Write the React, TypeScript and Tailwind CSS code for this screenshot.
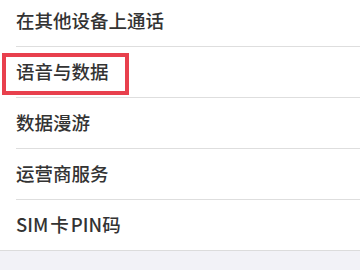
const ROWS = ['在其他设备上通话', '语音与数据', '数据漫游', '运营商服务', 'SIM卡PIN码']

export default function App() {
  return (
    <div className="h-[270px] w-[360px] overflow-hidden bg-[#f2f2f7] font-['Noto_Sans_CJK_SC','Noto_Sans',sans-serif]">
      <div className="-mt-1 border-b border-[#dcdcdc] bg-white">
        {ROWS.map((label, i) => (
          <div key={label} className="relative pl-4">
            <div
              className={
                i < ROWS.length - 1
                  ? 'flex h-[51px] items-center border-b border-[#dedede] text-[18.5px] font-medium text-[#333333]'
                  : 'flex h-[50px] items-center text-[18.5px] font-medium text-[#333333]'
              }
            >
              {label === 'SIM卡PIN码' ? (
                <span>
                  SIM<span className="mx-[2px]">卡</span>PIN码
                </span>
              ) : (
                label
              )}
            </div>
            {i === 1 && (
              <div className="pointer-events-none absolute left-[2px] top-[6px] h-[42px] w-[127px] border-4 border-[#e8404d]" />
            )}
          </div>
        ))}
      </div>
    </div>
  )
}
